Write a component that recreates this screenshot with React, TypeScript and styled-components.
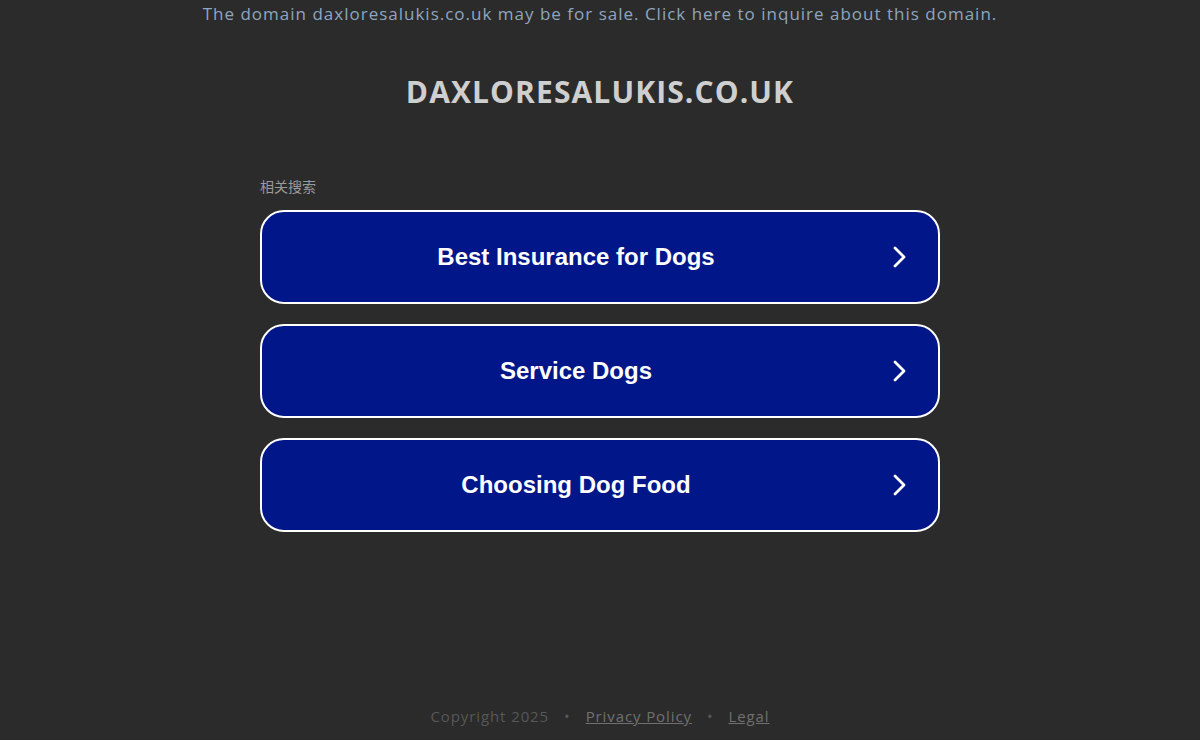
import React from "react";
import styled, { createGlobalStyle } from "styled-components";

const GlobalStyle = createGlobalStyle`
  html, body {
    margin: 0;
    padding: 0;
    background: #2b2b2b;
  }
  body {
    font-family: "Open Sans", "Noto Sans", sans-serif;
  }
`;

const Page = styled.div`
  height: 740px;
  display: flex;
  flex-direction: column;
  align-items: center;
  background: #2b2b2b;
`;

const Banner = styled.a`
  display: block;
  margin-top: 3px;
  font-size: 17px;
  line-height: 22px;
  color: #8fa6bf;
  text-decoration: none;
  letter-spacing: 1px;
`;

const Title = styled.h1`
  margin: 47px 0 0;
  font-size: 30px;
  line-height: 40px;
  font-weight: 700;
  color: #cfcfcf;
  letter-spacing: 1.1px;
`;

const Searches = styled.div`
  width: 680px;
  margin-top: 66px;
  display: flex;
  flex-direction: column;
`;

const Label = styled.div`
  font-family: "Noto Sans CJK SC", "Noto Sans", sans-serif;
  font-size: 14px;
  line-height: 16px;
  color: #9a9a9a;
  margin-bottom: 16px;
`;

const List = styled.div`
  display: flex;
  flex-direction: column;
  gap: 20px;
`;

const Link = styled.a`
  position: relative;
  box-sizing: border-box;
  height: 94px;
  display: flex;
  align-items: center;
  justify-content: center;
  padding-right: 48px;
  border: 2px solid #ffffff;
  border-radius: 24px;
  background: #011689;
  color: #ffffff;
  text-decoration: none;
  font-family: "Liberation Sans", Arial, sans-serif;
  font-weight: 700;
  font-size: 24px;
`;

const Chevron = styled.svg`
  position: absolute;
  right: 28px;
  top: 50%;
  transform: translateY(-50%);
`;

const Footer = styled.div`
  margin-top: auto;
  margin-bottom: 14px;
  display: flex;
  align-items: center;
  gap: 15px;
  font-size: 15px;
  line-height: 20px;
  color: #575757;
  letter-spacing: 0.9px;
`;

const FooterLink = styled.a`
  color: #707070;
  text-decoration: underline;
`;

const items = ["Best Insurance for Dogs", "Service Dogs", "Choosing Dog Food"];

export default function App() {
  return (
    <>
      <GlobalStyle />
      <Page>
        <Banner href="#">
          The domain daxloresalukis.co.uk may be for sale. Click here to inquire about this domain.
        </Banner>
        <Title>DAXLORESALUKIS.CO.UK</Title>
        <Searches>
          <Label>相关搜索</Label>
          <List>
            {items.map((t) => (
              <Link href="#" key={t}>
                {t}
                <Chevron width="20" height="24" viewBox="0 0 20 24">
                  <path
                    d="M5 3 L14 12 L5 21"
                    fill="none"
                    stroke="#ffffff"
                    strokeWidth="2.8"
                    strokeLinecap="round"
                    strokeLinejoin="round"
                  />
                </Chevron>
              </Link>
            ))}
          </List>
        </Searches>
        <Footer>
          <span>Copyright 2025</span>
          <span>•</span>
          <FooterLink href="#">Privacy Policy</FooterLink>
          <span>•</span>
          <FooterLink href="#">Legal</FooterLink>
        </Footer>
      </Page>
    </>
  );
}
